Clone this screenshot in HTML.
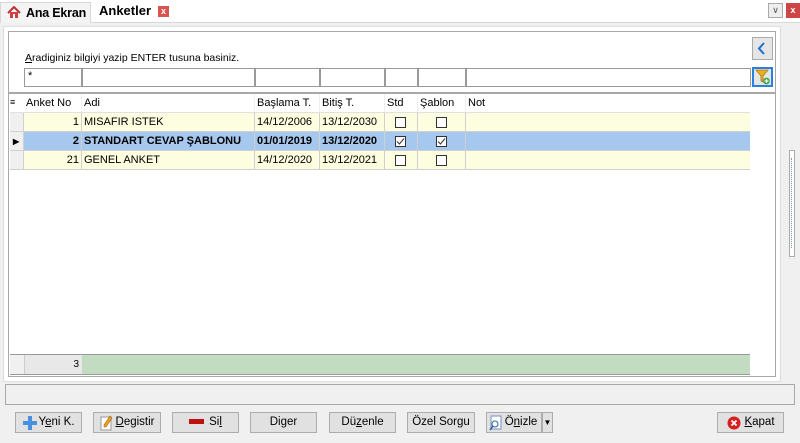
<!DOCTYPE html>
<html><head><meta charset="utf-8"><style>
*{margin:0;padding:0;box-sizing:border-box}
body{width:800px;height:443px;overflow:hidden;background:#f0f0f0;font-family:"Liberation Sans",sans-serif;font-size:11px;color:#000;position:relative}
.a{position:absolute}
.tabbar{left:0;top:0;width:800px;height:23px;background:#fff;border-bottom:1px solid #d8d8d8}
.cell{position:absolute;height:100%;border-right:1px solid #d0d0d0;padding:0 2px;line-height:19px;white-space:nowrap;overflow:hidden}
.row{position:absolute;left:10px;width:740px;height:19px;border-bottom:1px solid #d0d0d0}
.cb{position:absolute;width:11px;height:11px;border:1px solid #333;background:#fff;top:4px}
.btn{position:absolute;top:412px;height:21px;border:1px solid #adadad;background:#e1e1e1;text-align:center;line-height:19px;font-size:11.5px}
u{text-decoration:underline}
</style></head><body>
<div class="a tabbar"></div>
<div class="a" style="left:0;top:2px;width:91px;height:21px;background:#f4f4f4;border:1px solid #d8d8d8;border-bottom:none"></div>
<svg class="a" style="left:7px;top:6px" width="14" height="13" viewBox="0 0 14 13"><path d="M1 7L7 1L13 7" fill="none" stroke="#c03030" stroke-width="2"/><rect x="3" y="6" width="8" height="6" fill="#d04040"/><rect x="6" y="8" width="2" height="4" fill="#fff"/></svg>
<div class="a" style="left:26px;top:6px;font-weight:bold;font-size:12.5px;letter-spacing:-0.2px">Ana Ekran</div>
<div class="a" style="left:99px;top:3px;font-weight:bold;font-size:13px">Anketler</div>
<div class="a" style="left:158px;top:6px;width:11px;height:11px;background:#d9534f;color:#fff;font-size:9px;line-height:11px;text-align:center;font-weight:bold">x</div>
<div class="a" style="left:768px;top:3px;width:15px;height:15px;border:1px solid #aaa;background:#eee;font-size:9px;text-align:center;line-height:13px;color:#555">&#8744;</div>
<div class="a" style="left:786px;top:3px;width:14px;height:15px;background:#cd4545;color:#fff;font-size:9px;text-align:center;line-height:15px;font-weight:bold">x</div>

<div class="a" style="left:3px;top:26px;width:778px;height:356px;background:#fff;border:1px solid #ddd"></div>
<div class="a" style="left:781px;top:26px;width:19px;height:356px;background:#f0f0f0"></div>
<div class="a" style="left:789px;top:150px;width:6px;height:107px;border:1px solid #aaa;background:#fff"></div>
<div class="a" style="left:791px;top:158px;width:0;height:90px;border-left:1px dotted #6aa0d8"></div>

<div class="a" style="left:8px;top:31px;width:768px;height:62px;border:1px solid #a8a8a8"></div>
<div class="a" style="left:25px;top:52px;font-size:10.5px"><u>A</u>radiginiz bilgiyi yazip ENTER tusuna basiniz.</div>
<div class="a" style="left:24px;top:68px;width:727px;height:19px">
<div class="a" style="left:0;top:0;width:58px;height:19px;border:1px solid #999;padding-left:3px;line-height:14px">*</div>
<div class="a" style="left:58px;top:0;width:173px;height:19px;border:1px solid #999"></div>
<div class="a" style="left:231px;top:0;width:65px;height:19px;border:1px solid #999"></div>
<div class="a" style="left:296px;top:0;width:65px;height:19px;border:1px solid #999"></div>
<div class="a" style="left:361px;top:0;width:33px;height:19px;border:1px solid #999"></div>
<div class="a" style="left:394px;top:0;width:48px;height:19px;border:1px solid #999"></div>
<div class="a" style="left:442px;top:0;width:285px;height:19px;border:1px solid #999"></div>
</div>
<div class="a" style="left:752px;top:37px;width:21px;height:23px;border:1px solid #aaa;background:#e5e5e5"></div>
<svg class="a" style="left:757px;top:42px" width="10" height="13"><path d="M7 1L2 6.5L7 12" fill="none" stroke="#1a6fd0" stroke-width="2"/></svg>
<div class="a" style="left:752px;top:67px;width:21px;height:20px;border:2px solid #2a80e0;background:#e5e5e5"></div>
<svg class="a" style="left:755px;top:69px" width="16" height="16"><path d="M1 1H13L8 7V13L6 12V7Z" fill="#e8b020" stroke="#b07810" stroke-width="0.8"/><circle cx="11.5" cy="12" r="3.3" fill="#3aa040"/><path d="M11.5 10V14M9.5 12H13.5" stroke="#fff" stroke-width="1.2"/></svg>

<div class="a" style="left:8px;top:93px;width:768px;height:284px;border:1px solid #a8a8a8"></div>
<div class="row" style="top:94px;background:#fff;border-bottom:1px solid #e0e0e0">
<div class="cell" style="left:0;width:14px;border:none;padding:0;line-height:17px;font-size:9px">&#8801;</div>
<div class="cell" style="left:14px;width:58px;border-right:1px solid #eee">Anket No</div>
<div class="cell" style="left:72px;width:173px;border-right:1px solid #eee">Adi</div>
<div class="cell" style="left:245px;width:65px;border-right:1px solid #eee">Başlama T.</div>
<div class="cell" style="left:310px;width:65px;border-right:1px solid #eee">Bitiş T.</div>
<div class="cell" style="left:375px;width:33px;border-right:1px solid #eee">Std</div>
<div class="cell" style="left:408px;width:48px;border-right:1px solid #eee">Şablon</div>
<div class="cell" style="left:456px;width:284px;border:none">Not</div>
</div>

<div class="row" style="top:113px;background:#fdfde0">
<div class="cell" style="left:0;width:14px;background:#f0f0f0"></div>
<div class="cell" style="left:14px;width:58px;text-align:right">1</div>
<div class="cell" style="left:72px;width:173px">MISAFIR ISTEK</div>
<div class="cell" style="left:245px;width:65px">14/12/2006</div>
<div class="cell" style="left:310px;width:65px">13/12/2030</div>
<div class="cell" style="left:375px;width:33px"><div class="cb" style="left:10px"></div></div>
<div class="cell" style="left:408px;width:48px"><div class="cb" style="left:18px"></div></div>
</div>
<div class="row" style="top:132px;background:#a6c8ee;font-weight:bold">
<div class="cell" style="left:0;width:14px;background:#f0f0f0;font-size:8px;padding-left:3px">&#9654;</div>
<div class="cell" style="left:14px;width:58px;text-align:right">2</div>
<div class="cell" style="left:72px;width:173px">STANDART CEVAP ŞABLONU</div>
<div class="cell" style="left:245px;width:65px">01/01/2019</div>
<div class="cell" style="left:310px;width:65px">13/12/2020</div>
<div class="cell" style="left:375px;width:33px"><div class="cb" style="left:10px"><svg width="9" height="9" style="position:absolute;left:0;top:0"><path d="M1 4.5L3.5 7L8 1.5" fill="none" stroke="#333" stroke-width="1"/></svg></div></div>
<div class="cell" style="left:408px;width:48px"><div class="cb" style="left:18px"><svg width="9" height="9" style="position:absolute;left:0;top:0"><path d="M1 4.5L3.5 7L8 1.5" fill="none" stroke="#333" stroke-width="1"/></svg></div></div>
</div>
<div class="row" style="top:151px;background:#fdfde0">
<div class="cell" style="left:0;width:14px;background:#f0f0f0"></div>
<div class="cell" style="left:14px;width:58px;text-align:right">21</div>
<div class="cell" style="left:72px;width:173px">GENEL ANKET</div>
<div class="cell" style="left:245px;width:65px">14/12/2020</div>
<div class="cell" style="left:310px;width:65px">13/12/2021</div>
<div class="cell" style="left:375px;width:33px"><div class="cb" style="left:10px"></div></div>
<div class="cell" style="left:408px;width:48px"><div class="cb" style="left:18px"></div></div>
</div>

<div class="a" style="left:10px;top:354px;width:740px;height:21px;background:#c2dcc2;border-top:1px solid #999;border-bottom:1px solid #999"></div>
<div class="a" style="left:10px;top:355px;width:15px;height:19px;background:#f0f0f0;border-right:1px solid #ccc"></div>
<div class="a" style="left:25px;top:355px;width:57px;height:19px;background:#e8e8e8;text-align:right;padding-right:3px;line-height:19px;font-size:10px">3</div>

<div class="a" style="left:5px;top:384px;width:790px;height:21px;border:1px solid #a8a8a8;background:#f0f0f0"></div>

<div class="btn" style="left:15px;width:67px"><svg style="position:absolute;left:7px;top:3px" width="14" height="14"><path d="M5 0H9V5H14V9H9V14H5V9H0V5H5Z" fill="#4a90e0"/></svg><span style="padding-left:16px">Y<u>e</u>ni K.</span></div>
<div class="btn" style="left:93px;width:68px"><svg style="position:absolute;left:6px;top:2px" width="14" height="16"><rect x="1" y="2" width="10" height="13" fill="#fff" stroke="#999"/><path d="M10 1L12 3L6 12L4 12L4 10Z" fill="#f0a020" stroke="#a06010" stroke-width="0.6"/></svg><span style="padding-left:16px"><u>D</u>egistir</span></div>
<div class="btn" style="left:172px;width:67px"><span style="display:inline-block;width:15px;height:5px;background:#c01010;vertical-align:middle;margin-right:5px"></span>Si<u>l</u></div>
<div class="btn" style="left:250px;width:67px">Di<u>g</u>er</div>
<div class="btn" style="left:329px;width:67px">Dü<u>z</u>enle</div>
<div class="btn" style="left:407px;width:68px">Özel Sorgu</div>
<div class="btn" style="left:486px;width:56px"><svg style="position:absolute;left:2px;top:2px" width="14" height="16"><rect x="2" y="1" width="10" height="13" fill="#fff" stroke="#7090c0"/><circle cx="6" cy="9" r="3" fill="none" stroke="#3060a0"/><path d="M4 11L1 15" stroke="#3060a0" stroke-width="1.5"/></svg><span style="padding-left:14px">Ö<u>n</u>izle</span></div>
<div class="btn" style="left:542px;width:11px;font-size:8px">&#9660;</div>
<div class="btn" style="left:717px;width:67px"><svg style="position:absolute;left:9px;top:3px" width="14" height="14"><circle cx="7" cy="7" r="6.5" fill="#d42020"/><path d="M4.5 4.5L9.5 9.5M9.5 4.5L4.5 9.5" stroke="#fff" stroke-width="1.8"/></svg><span style="padding-left:18px"><u>K</u>apat</span></div>
</body></html>
